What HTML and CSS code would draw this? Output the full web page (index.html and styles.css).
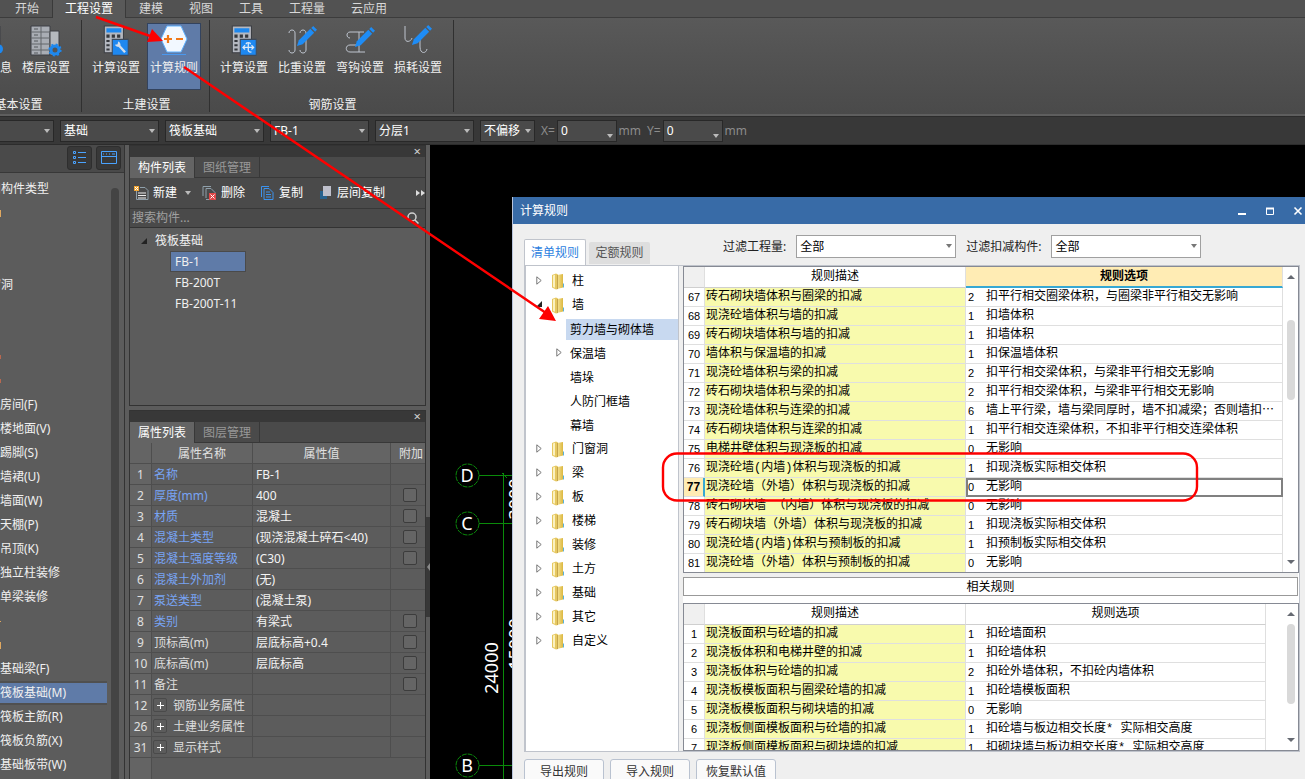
FILE: index.html
```html
<!DOCTYPE html>
<html lang="zh-CN">
<head>
<meta charset="utf-8">
<title>计算规则</title>
<link rel="stylesheet" href="styles.css">
</head>
<body>
<svg width="0" height="0" class="defs" aria-hidden="true">
  <defs>
    <linearGradient id="gold" x1="0" x2="1" y1="0" y2="0"><stop offset="0" stop-color="#f6e59a"/><stop offset="1" stop-color="#dcb840"/></linearGradient>
    <symbol id="folder" viewBox="0 0 14 17">
      <path d="M1 2l4-1.500 2 1V16l-2 .5-4-2z" fill="#e6c860"/>
      <path d="M2 2.500l2-.8v13L2 14z" fill="#fbf1c0"/>
      <path d="M6 2l6-1v13.500L6 16z" fill="url(#gold)"/>
      <path d="M6.500 2v14" stroke="#b08a2c" stroke-width=".7"/>
      <path d="M12.500 10.500v4" stroke="#5ab0d8" stroke-width="1"/>
    </symbol>
    <symbol id="closed" viewBox="0 0 6 9"><path d="M.8.8v7.4L5.2 4.500z" fill="none" stroke="#777" stroke-width="1"/></symbol>
    <symbol id="opened" viewBox="0 0 6 6"><path d="M6 0v6H0z" fill="#222"/></symbol>
    <symbol id="calc" viewBox="0 0 24 30">
      <path d="M1 1h18v25H1z" fill="#b4b8c0" stroke="#3c3f44"/>
      <path d="M3 3h14v4H3z" fill="#1e88ee"/>
      <path d="M3 9h3v3H3zM8 9h3v3H8zM13 9h3v3h-3zM3 14h3v2H3zM3 18h3v2H3zM3 22h3v2H3z" fill="#35383d"/>
      <path d="M8.500 13.500h15v15h-15z" fill="#1e88f0" stroke="#3c4a5c"/>
    </symbol>
    <symbol id="pencil" viewBox="0 0 22 22">
      <path d="M1 21l2-6L15 3l4 4L7 19z" fill="#1e8cf5"/><path d="M16 2l2-2 4 4-2 2z" fill="#1e8cf5"/>
    </symbol>
  </defs>
</svg>

<div class="app">
  <nav class="tabs">
    <button>开始</button><button class="on">工程设置</button><button>建模</button><button>视图</button><button>工具</button><button>工程量</button><button>云应用</button>
  </nav>

  <div class="ribbon">
    <section class="group group-first">
      <div class="tools">
        <button class="tool"><svg width="30" height="32" viewBox="0 0 30 32"><path d="M7 1h20v28H7z" fill="#aeb3ba" stroke="#3c3f44"/><circle cx="25" cy="24" r="5" fill="#1e88f0"/></svg>工程信息</button>
        <button class="tool"><svg width="32" height="32" viewBox="0 0 32 32">
          <path d="M1 1h19v29H1z" fill="#a9adb4" stroke="#3c3f44"/><path d="M20 6h9v24h-9z" fill="#b4b8be" stroke="#3c3f44"/>
          <path d="M11 1v29M1 7h19M1 13h19M1 19h19M1 25h19" stroke="#63666b"/><path d="M4 4h4M4 10h4M4 16h4M4 22h4M4 28h4" stroke="#55585d"/>
          <circle cx="25" cy="25" r="4" fill="#555" stroke="#1e88ee" stroke-width="3"/><circle cx="25" cy="25" r="5.600" fill="none" stroke="#1e88ee" stroke-width="2" stroke-dasharray="2 2.400"/></svg>楼层设置</button>
      </div><h3>基本设置</h3>
    </section>
    <section class="group">
      <div class="tools">
        <button class="tool"><svg width="26" height="32" viewBox="0 0 24 30"><use href="#calc"/><path d="M14.500 19l6 6.500" stroke="#d4deea" stroke-width="2.200"/><path d="M14 15.500l-.5 2.500-2.500.5a3 3 0 0 0 5 1 3 3 0 0 0-2-4z" fill="#d4deea"/></svg>计算设置</button>
        <button class="tool on"><svg width="32" height="32" viewBox="0 0 32 32"><path d="M9 1h14l6 13-6 13H9L3 14z" fill="#f2f8ff" stroke="#5fb1ff"/><path d="M6 14h8M10 10v8M18 14h7" stroke="#f07818" stroke-width="2.200"/><path d="M4 29.500h24" stroke="#4a98ee"/></svg>计算规则</button>
      </div><h3>土建设置</h3>
    </section>
    <section class="group">
      <div class="tools">
        <button class="tool"><svg width="26" height="32" viewBox="0 0 24 30"><use href="#calc"/><path d="M11 21h10M13 19l-2 2 2 2M19 19l2 2-2 2M16 17v7a2 2 0 0 0 3 1M14 18c0-2 4-2 4 0" fill="none" stroke="#dbe8f6" stroke-width="1.200"/></svg>计算设置</button>
        <button class="tool"><svg width="32" height="32" viewBox="0 0 32 32"><path d="M3 8c0-4 6-4 6 0v17c0 4-6 4-6 0M14 8c0-4 6-4 6 0v17c0 4-6 4-6 0" fill="none" stroke="#bfc5cf"/><use href="#pencil" x="10" y="1" width="21" height="21"/></svg>比重设置</button>
        <button class="tool"><svg width="32" height="32" viewBox="0 0 32 32"><path d="M20 7H6c-4 0-4 6 0 6M15 7v20M21 27H6c-5 0-5-7 0-7h9" fill="none" stroke="#bfc5cf"/><use href="#pencil" x="10" y="2" width="21" height="21"/></svg>弯钩设置</button>
        <button class="tool"><svg width="32" height="32" viewBox="0 0 32 32"><path d="M3 1v12c0 5 6 4 7 0M18 10v12c0 7 6 7 7 2" fill="none" stroke="#bfc5cf"/><use href="#pencil" x="9" y="0" width="21" height="21"/></svg>损耗设置</button>
      </div><h3>钢筋设置</h3>
    </section>
  </div>

  <div class="options">
    <span class="pick pick-cut"><select aria-label="楼层"><option></option></select></span>
    <span class="pick"><select aria-label="类别"><option>基础</option></select></span>
    <span class="pick"><select aria-label="类型"><option>筏板基础</option></select></span>
    <span class="pick"><select aria-label="构件"><option>FB-1</option></select></span>
    <span class="pick"><select aria-label="分层"><option>分层1</option></select></span>
    <span class="pick pick-small"><select aria-label="偏移"><option>不偏移</option></select></span>
    <label class="offset">X=<span class="pick pick-num"><input value="0"></span>mm</label>
    <label class="offset">Y=<span class="pick pick-num"><input value="0"></span>mm</label>
  </div>

  <main class="work">
    <aside class="nav">
      <div class="nav-head">
        <button aria-label="列表"><svg width="14" height="14" viewBox="0 0 14 14" fill="none" stroke="#4aa3ff"><path d="M.5.500h2v2h-2zM.5 5.500h2v2h-2zM.5 10.500h2v2h-2zM5 1.500h8M5 6.500h8M5 11.500h8"/></svg></button>
        <button aria-label="视图"><svg width="16" height="14" viewBox="0 0 16 14" fill="none" stroke="#4aa3ff"><path d="M.5.500h15v12H.5zM.5 5.500h15M2 3h1M5 3h1M8 3h1M11 3h3"/></svg></button>
      </div>
      <div class="nav-body">
        <ul>
          <li class="cut">常用构件类型</li><li><i></i></li><li></li><li></li><li class="cut">门窗洞</li><li></li><li></li><li><i class="red"></i></li><li><i class="red"></i></li>
          <li>房间(F)</li><li>楼地面(V)</li><li>踢脚(S)</li><li>墙裙(U)</li><li>墙面(W)</li><li>天棚(P)</li><li>吊顶(K)</li><li>独立柱装修</li><li>单梁装修</li><li><i class="dot"></i></li><li><i></i></li>
          <li>基础梁(F)</li><li class="on">筏板基础(M)</li><li>筏板主筋(R)</li><li>筏板负筋(X)</li><li>基础板带(W)</li>
        </ul>
        <div class="nav-scroll"></div>
      </div>
    </aside>

    <div class="docks">
      <section class="dock">
        <div class="dock-top"><button aria-label="关闭">×</button></div>
        <div class="dock-tabs"><button class="on">构件列表</button><button>图纸管理</button></div>
        <div class="dock-tools">
          <button><svg width="15" height="16" viewBox="0 0 15 16" fill="none"><path d="M6 2.500h5l3 3v9H2.500V6" stroke="#8fa0ab"/><path d="M4 8h8M4 10.500h8M4 13h8" stroke="#eee"/><path d="M0 1h5v5H0z" fill="#f2a633"/><path d="M1 2h1v1H1zM3 2h1v1H3zM2 3h1v1H2zM1 4h1v1H1zM3 4h1v1H3z" fill="#fff"/></svg>新建<b class="down"></b></button>
          <button class="t-del"><svg width="15" height="16" viewBox="0 0 15 16" fill="none"><path d="M1 11V1.500h8M4 13V3.500h5l4 4v7H4" stroke="#8fa0ab"/><path d="M7 8h7v7H7z" fill="#e04848"/><path d="M8.500 9.500l4 4M12.500 9.500l-4 4" stroke="#fff"/></svg>删除</button>
          <button class="t-copy"><svg width="13" height="16" viewBox="0 0 13 16" fill="none"><path d="M.5 12V1.500H8M3 3.500h5l4 4v7H3z" stroke="#3c93ee"/><path d="M5 7h4M5 9.500h5M5 12h5" stroke="#3c93ee"/></svg>复制</button>
          <button class="t-layer"><svg width="13" height="16" viewBox="0 0 13 16"><path d="M1 6h7v8H1z" fill="#27628f"/><path d="M4 1h8v10H4z" fill="#bfc0cc"/></svg>层间复制</button>
          <span class="more"><b></b><b></b></span>
        </div>
        <label class="search"><input placeholder="搜索构件..." aria-label="搜索构件"><svg width="12" height="12" viewBox="0 0 12 12" fill="none" stroke="#d0d0d0" stroke-width="1.500"><circle cx="5" cy="5" r="4"/><path d="M8 8l3.500 3.500"/></svg></label>
        <div class="parts">
          <p class="root"><svg width="6" height="6"><use href="#opened"/></svg>筏板基础</p>
          <p class="on">FB-1</p><p>FB-200T</p><p>FB-200T-11</p>
        </div>
      </section>

      <section class="dock dock-props">
        <div class="dock-top"><button aria-label="关闭">×</button></div>
        <div class="dock-tabs"><button class="on">属性列表</button><button>图层管理</button></div>
        <table class="props">
          <colgroup><col class="p-no"><col class="p-name"><col><col class="p-add"></colgroup>
          <thead><tr><th></th><th>属性名称</th><th>属性值</th><th>附加</th></tr></thead>
          <tbody>
            <tr><th>1</th><td class="key">名称</td><td>FB-1</td><td></td></tr>
            <tr><th>2</th><td class="key">厚度(mm)</td><td>400</td><td><input type="checkbox" aria-label="附加 厚度"></td></tr>
            <tr><th>3</th><td class="key">材质</td><td>混凝土</td><td><input type="checkbox" aria-label="附加 材质"></td></tr>
            <tr><th>4</th><td class="key">混凝土类型</td><td>(现浇混凝土碎石&lt;40)</td><td><input type="checkbox" aria-label="附加 混凝土类型"></td></tr>
            <tr><th>5</th><td class="key">混凝土强度等级</td><td>(C30)</td><td><input type="checkbox" aria-label="附加 混凝土强度等级"></td></tr>
            <tr><th>6</th><td class="key">混凝土外加剂</td><td>(无)</td><td></td></tr>
            <tr><th>7</th><td class="key">泵送类型</td><td>(混凝土泵)</td><td></td></tr>
            <tr><th>8</th><td class="key">类别</td><td>有梁式</td><td><input type="checkbox" aria-label="附加 类别"></td></tr>
            <tr><th>9</th><td>顶标高(m)</td><td>层底标高+0.4</td><td><input type="checkbox" aria-label="附加 顶标高"></td></tr>
            <tr><th>10</th><td>底标高(m)</td><td>层底标高</td><td><input type="checkbox" aria-label="附加 底标高"></td></tr>
            <tr><th>11</th><td>备注</td><td></td><td><input type="checkbox" aria-label="附加 备注"></td></tr>
            <tr><th>12</th><td><button class="plus" aria-label="展开"></button>钢筋业务属性</td><td></td><td></td></tr>
            <tr><th>26</th><td><button class="plus" aria-label="展开"></button>土建业务属性</td><td></td><td></td></tr>
            <tr><th>31</th><td><button class="plus" aria-label="展开"></button>显示样式</td><td></td><td></td></tr>
          </tbody>
        </table>
        <div class="props-rest"></div>
      </section>
    </div>

    <div class="splitter"><button aria-label="收起"></button></div>

    <div class="canvas">
      <svg class="axes" width="90" height="640" viewBox="0 0 90 640">
        <g fill="none" stroke="#0a8a0a">
          <path d="M49 330.500h41M49 378.500h41M49 620.500h41M73.500 328v312M72 328l5 5"/>
          <circle cx="37.500" cy="330.500" r="11.500" stroke-dasharray="5 1"/><circle cx="37.500" cy="378.500" r="11.500" stroke-dasharray="5 1"/><circle cx="37.500" cy="620.500" r="11.500" stroke-dasharray="5 1"/>
        </g>
        <g fill="#fff" text-anchor="middle">
          <text x="37" y="337">D</text><text x="37" y="385">C</text><text x="37" y="627">B</text>
          <text transform="translate(68 523) rotate(-90)">24000</text>
          <text transform="translate(92 499) rotate(-90)">15000</text>
          <text transform="translate(92 354) rotate(-90)">3000</text>
        </g>
      </svg>

      <section class="dialog">
        <header class="title"><h2>计算规则</h2>
          <button aria-label="最小化"><svg width="10" height="10"><path d="M1 8h8" stroke="#fff" stroke-width="2"/></svg></button>
          <button aria-label="最大化"><svg width="10" height="10"><path d="M1.500 2v6.500h7V2" fill="none" stroke="#fff"/><path d="M1 2.500h8" stroke="#fff" stroke-width="2"/></svg></button>
          <button aria-label="关闭"><svg width="10" height="10"><path d="M1.500 1.500l7 7M8.500 1.500l-7 7" stroke="#fff" stroke-width="1.600"/></svg></button>
        </header>
        <div class="dialog-body">
          <div class="bar">
            <button class="tab on">清单规则</button><button class="tab">定额规则</button>
            <label class="filter">过滤工程量:<span class="pick pick-light"><select><option>全部</option></select></span></label>
            <label class="filter filter-b">过滤扣减构件:<span class="pick pick-light"><select><option>全部</option></select></span></label>
          </div>
          <div class="pane">
            <ul class="tree">
              <li><svg class="tw" width="6" height="9"><use href="#closed"/></svg><svg class="fd" width="14" height="17"><use href="#folder"/></svg>柱</li>
              <li><svg class="tw" width="6" height="6"><use href="#opened"/></svg><svg class="fd" width="14" height="17"><use href="#folder"/></svg>墙</li>
              <li class="sub on"><span>剪力墙与砌体墙</span></li>
              <li class="sub"><svg class="tw" width="6" height="9"><use href="#closed"/></svg><span>保温墙</span></li>
              <li class="sub"><span>墙垛</span></li>
              <li class="sub"><span>人防门框墙</span></li>
              <li class="sub"><span>幕墙</span></li>
              <li><svg class="tw" width="6" height="9"><use href="#closed"/></svg><svg class="fd" width="14" height="17"><use href="#folder"/></svg>门窗洞</li>
              <li><svg class="tw" width="6" height="9"><use href="#closed"/></svg><svg class="fd" width="14" height="17"><use href="#folder"/></svg>梁</li>
              <li><svg class="tw" width="6" height="9"><use href="#closed"/></svg><svg class="fd" width="14" height="17"><use href="#folder"/></svg>板</li>
              <li><svg class="tw" width="6" height="9"><use href="#closed"/></svg><svg class="fd" width="14" height="17"><use href="#folder"/></svg>楼梯</li>
              <li><svg class="tw" width="6" height="9"><use href="#closed"/></svg><svg class="fd" width="14" height="17"><use href="#folder"/></svg>装修</li>
              <li><svg class="tw" width="6" height="9"><use href="#closed"/></svg><svg class="fd" width="14" height="17"><use href="#folder"/></svg>土方</li>
              <li><svg class="tw" width="6" height="9"><use href="#closed"/></svg><svg class="fd" width="14" height="17"><use href="#folder"/></svg>基础</li>
              <li><svg class="tw" width="6" height="9"><use href="#closed"/></svg><svg class="fd" width="14" height="17"><use href="#folder"/></svg>其它</li>
              <li><svg class="tw" width="6" height="9"><use href="#closed"/></svg><svg class="fd" width="14" height="17"><use href="#folder"/></svg>自定义</li>
            </ul>
            <div class="rules">
              <div class="grid">
                <table>
                  <colgroup><col class="c-no"><col class="c-desc"><col></colgroup>
                  <thead><tr><th></th><th>规则描述</th><th class="hot">规则选项</th></tr></thead>
                  <tbody>
                    <tr><th>67</th><td>砖石砌块墙体积与圈梁的扣减</td><td><em>2</em>扣平行相交圈梁体积，与圈梁非平行相交无影响</td></tr>
                    <tr><th>68</th><td>现浇砼墙体积与墙的扣减</td><td><em>1</em>扣墙体积</td></tr>
                    <tr><th>69</th><td>砖石砌块墙体积与墙的扣减</td><td><em>1</em>扣墙体积</td></tr>
                    <tr><th>70</th><td>墙体积与保温墙的扣减</td><td><em>1</em>扣保温墙体积</td></tr>
                    <tr><th>71</th><td>现浇砼墙体积与梁的扣减</td><td><em>2</em>扣平行相交梁体积，与梁非平行相交无影响</td></tr>
                    <tr><th>72</th><td>砖石砌块墙体积与梁的扣减</td><td><em>2</em>扣平行相交梁体积，与梁非平行相交无影响</td></tr>
                    <tr><th>73</th><td>现浇砼墙体积与连梁的扣减</td><td><em>6</em>墙上平行梁，墙与梁同厚时，墙不扣减梁；否则墙扣⋯</td></tr>
                    <tr><th>74</th><td>砖石砌块墙体积与连梁的扣减</td><td><em>1</em>扣平行相交连梁体积，不扣非平行相交连梁体积</td></tr>
                    <tr><th>75</th><td>电梯井壁体积与现浇板的扣减</td><td><em>0</em>无影响</td></tr>
                    <tr><th>76</th><td>现浇砼墙(内墙)体积与现浇板的扣减</td><td><em>1</em>扣现浇板实际相交体积</td></tr>
                    <tr class="current"><th>77</th><td>现浇砼墙（外墙）体积与现浇板的扣减</td><td><em>0</em>无影响</td></tr>
                    <tr><th>78</th><td>砖石砌块墙 （内墙）体积与现浇板的扣减</td><td><em>0</em>无影响</td></tr>
                    <tr><th>79</th><td>砖石砌块墙（外墙）体积与现浇板的扣减</td><td><em>1</em>扣现浇板实际相交体积</td></tr>
                    <tr><th>80</th><td>现浇砼墙(内墙)体积与预制板的扣减</td><td><em>1</em>扣预制板实际相交体积</td></tr>
                    <tr><th>81</th><td>现浇砼墙（外墙）体积与预制板的扣减</td><td><em>0</em>无影响</td></tr>
                  </tbody>
                </table>
                <div class="scroll scroll-mid"><b></b></div>
              </div>
              <div class="related">相关规则</div>
              <div class="grid grid-low">
                <table>
                  <colgroup><col class="c-no"><col class="c-desc"><col></colgroup>
                  <thead><tr><th></th><th>规则描述</th><th>规则选项</th></tr></thead>
                  <tbody>
                    <tr><th>1</th><td>现浇板面积与砼墙的扣减</td><td><em>1</em>扣砼墙面积</td></tr>
                    <tr><th>2</th><td>现浇板体积和电梯井壁的扣减</td><td><em>1</em>扣砼墙体积</td></tr>
                    <tr><th>3</th><td>现浇板体积与砼墙的扣减</td><td><em>2</em>扣砼外墙体积，不扣砼内墙体积</td></tr>
                    <tr><th>4</th><td>现浇板模板面积与圈梁砼墙的扣减</td><td><em>1</em>扣砼墙模板面积</td></tr>
                    <tr><th>5</th><td>现浇板模板面积与砌块墙的扣减</td><td><em>0</em>无影响</td></tr>
                    <tr><th>6</th><td>现浇板侧面模板面积与砼墙的扣减</td><td><em>1</em>扣砼墙与板边相交长度* 实际相交高度</td></tr>
                    <tr><th>7</th><td>现浇板侧面模板面积与砌块墙的扣减</td><td><em>1</em>扣砌块墙与板边相交长度* 实际相交高度</td></tr>
                  </tbody>
                </table>
                <div class="scroll"><b></b></div>
              </div>
            </div>
          </div>
          <footer><button>导出规则</button><button>导入规则</button><button>恢复默认值</button></footer>
        </div>
      </section>
    </div>
  </main>
</div>

<svg class="marks" width="1305" height="779" viewBox="0 0 1305 779" aria-hidden="true">
  <g fill="none" stroke="#fe0000" stroke-width="2.400"><path d="M96 17l54 19M184 67l362 246"/><rect x="663" y="453.500" width="534" height="47" rx="14"/></g>
  <path d="M163 41l-16 1 5-13zM556 321l-17-2 9-13z" fill="#fe0000"/>
</svg>
</body>
</html>
```

FILE: styles.css
```css
* { box-sizing: border-box; }
html, body { height: 100%; margin: 0; overflow: hidden; }
body { font: 12px/16px "Noto Sans", "Noto Sans CJK SC", sans-serif; color: #f0f0f0; background: #4c4c4c; position: relative; }
button, input, select { font: inherit; color: inherit; margin: 0; padding: 0; border: 0; background: none; border-radius: 0; }
h2, h3, p, ul { margin: 0; padding: 0; font: inherit; list-style: none; }
table { border-collapse: separate; border-spacing: 0; table-layout: fixed; }
th, td { padding: 0; font-weight: normal; white-space: nowrap; overflow: hidden; }
svg { flex: none; }
.defs { position: absolute; }
.app { height: 100vh; display: flex; flex-direction: column; }
.marks { position: absolute; left: 0; top: 0; pointer-events: none; }

/* ribbon */
.tabs { display: flex; height: 18px; padding-left: 2px; background: #525252; border-bottom: 1px solid #3c3c3c; flex: none; }
.tabs button { padding: 0 13px; height: 18px; line-height: 16px; color: #d8d8d8; }
.tabs .on { background: #595959; border: solid #3a3a3a; border-width: 0 1px; color: #fff; padding: 0 12px; }
.ribbon { display: flex; height: 98px; padding-top: 2px; flex: none; background: linear-gradient(#595959, #4a4a4a); border-bottom: 2px solid #5e5e5e; }
.group { height: 92px; padding: 3px 6px 0 5px; border-right: 1px solid #303030; display: flex; flex-direction: column; align-items: center; }
.group-first { margin-left: -43px; padding: 3px 6px 0 2px; }
.tools { display: flex; }
.tool { width: 54px; height: 67px; margin: 0 2px; padding-top: 1px; display: flex; flex-direction: column; align-items: center; gap: 3px; white-space: nowrap; border: 1px solid transparent; }
.tool.on { background: #5f7ba8; border-color: #33435e; }
.group h3 { margin-top: 7px; padding-left: 3px; color: #f0f0f0; }

/* option bar */
.options { display: flex; align-items: center; height: 29px; gap: 6px; background: #383838; border-top: 1px solid #2c2c2c; border-bottom: 1px solid #2c2c2c; flex: none; }
.pick { position: relative; display: block; width: 99px; height: 22px; }
.pick select, .pick input { appearance: none; width: 100%; height: 100%; padding: 0 3px; background: #4a4a4a; border: 1px solid #282828; color: #fff; outline: 0; }
.pick::after { content: ""; position: absolute; right: 4px; top: 9px; border: 3px solid transparent; border-top: 4px solid #bbb; border-bottom: 0; pointer-events: none; }
.pick-cut { width: 54px; }
.pick-cut select { border-left: 0; }
.pick-small { width: 55px; }
.pick-num { width: 61px; }
.pick-num::after { top: 14px; }
.offset { display: flex; align-items: center; gap: 2px; color: #8c8c8c; width: 100px; }
.pick-light { width: 160px; height: 23px; }
.pick-light select { background: #fff; border-color: #a0a0a0; color: #000; }
.pick-light::after { border-top-color: #777; }

.work { flex: 1; display: flex; min-height: 0; }

/* component navigation */
.nav { width: 125px; flex: none; display: flex; flex-direction: column; background: #5c5c5c; border-right: 1px solid #333; }
.nav-head { height: 28px; padding: 1px 3px; display: flex; justify-content: flex-end; gap: 4px; background: #4a4a4a; border-bottom: 1px solid #383838; flex: none; }
.nav-head button { width: 25px; height: 24px; background: #383838; border: 1px solid #2e2e2e; border-radius: 3px; display: grid; place-items: center; }
.nav-body { flex: 1; display: flex; overflow: hidden; padding-right: 5px; gap: 3px; }
.nav-body ul { flex: 1; min-width: 0; padding-top: 4px; }
.nav-body li { height: 24px; line-height: 22px; white-space: nowrap; display: flex; align-items: center; }
.nav-body .cut { text-indent: -23px; }
.nav-body .on { background: #5f7ba8; border: solid #505050; border-width: 2px 0; background-clip: padding-box; margin-right: 1px; }
.nav-body i { width: 1px; height: 7px; background: #e0a860; }
.nav-body .red { height: 4px; background: #b86850; }
.nav-body .dot { height: 1px; }
.nav-scroll { width: 8px; margin-top: 15px; background: #444; border-radius: 4px 4px 0 0; }

/* docked panels */
.docks { width: 301px; flex: none; padding-left: 4px; display: flex; flex-direction: column; gap: 4px; background: #5c5c5c; }
.dock { border: 1px solid #333; display: flex; flex-direction: column; height: 261px; flex: none; }
.dock-props { flex: 1; min-height: 0; border-bottom: 0; overflow: hidden; }
.dock-top { height: 10px; background: #383838; display: flex; justify-content: flex-end; padding-right: 4px; flex: none; }
.dock-top button { line-height: 10px; height: 10px; font-size: 13px; color: #d0d0d0; }
.dock-tabs { height: 22px; display: flex; background: #4a4a4a; border-bottom: 1px solid #383838; border-top: 1px solid #383838; flex: none; }
.dock-tabs button { width: 65px; height: 21px; border-right: 1px solid #383838; color: #989898; }
.dock-tabs .on { background: #646464; color: #fff; }
.dock-tools { height: 31px; display: flex; align-items: center; background: #4a4a4a; border-bottom: 1px solid #383838; padding: 0 0 0 4px; flex: none; }
.dock-tools button { display: flex; align-items: center; gap: 4px; white-space: nowrap; color: #fff; }
.down { border: 3px solid transparent; border-top: 4px solid #bbb; border-bottom: 0; margin-left: 4px; }
.dock-tools .t-del { margin-left: 11px; }
.dock-tools .t-copy { margin-left: 16px; gap: 5px; }
.dock-tools .t-layer { margin-left: 16px; gap: 5px; }
.more { margin-left: auto; display: flex; gap: 1px; }
.more b { border: 3px solid transparent; border-left: 4px solid #ddd; border-right: 0; }
.search { height: 19px; display: flex; align-items: center; background: #4a4a4a; border-bottom: 1px solid #333; padding: 0 6px 0 2px; flex: none; }
.search input { flex: 1; min-width: 0; outline: 0; }
.search input::placeholder { color: #a0a0a0; }
.parts { padding: 2px 0 0 40px; }
.parts p { width: 76px; height: 21px; padding-left: 4px; line-height: 19px; border: 1px solid transparent; white-space: nowrap; }
.parts .root { margin-left: -30px; padding: 0; display: flex; align-items: center; gap: 8px; }
.parts .on { background: #5f7ba8; border-color: #4a4a4a; }
.props { width: 100%; }
.p-no { width: 22px; } .p-name { width: 101px; } .p-add { width: 34px; }
.props th, .props td { height: 21px; line-height: 19px; border: solid #4e4e4e; border-width: 0 1px 1px 0; }
.props td { padding-left: 3px; background: #5c5c5c; color: #f4f4f4; }
.props tbody td:nth-child(2) { color: #ddd; padding-left: 2px; }
.props tbody .key:nth-child(2) { color: #78a4f4; }
.props th { background: #646464; text-align: center; color: #e0e0e0; }
.props td:last-child, .props thead th:last-child { border-right: 0; }
.props thead th:last-child { padding-left: 6px; }
.props td:last-child { padding-left: 12px; }
.props input { appearance: none; display: block; width: 14px; height: 14px; border: 1px solid #3c3c3c; border-radius: 2px; background: #656565; }
.plus { width: 14px; height: 14px; vertical-align: middle; margin: 0 6px 2px -1px; border: 1px solid #4a4a4a; border-radius: 2px; background: linear-gradient(#fff, #fff) center / 7px 1px no-repeat, linear-gradient(#fff, #fff) center / 1px 7px no-repeat; }
.props-rest { flex: 1; width: 22px; background: #646464; border-right: 1px solid #4e4e4e; }
.splitter { width: 4px; flex: none; background: #5c5c5c; display: flex; align-items: center; padding-top: 210px; }
.splitter button { width: 4px; height: 100px; background: #383838; display: grid; place-items: center; }
.splitter button::before { content: ""; border: 4px solid transparent; border-right: 3px solid #888; border-left: 0; }

/* drawing area */
.canvas { flex: 1; min-width: 0; position: relative; background: #000; overflow: hidden; }
.axes { position: absolute; left: 0; top: 0; font: 18px "Noto Sans", sans-serif; }

/* rule dialog */
.dialog { position: absolute; left: 82px; right: 0; top: 52px; bottom: -12px; display: flex; flex-direction: column; background: #efefef; color: #000; border-left: 1px solid #b8c4dc; }
.title { height: 27px; display: flex; align-items: center; gap: 18px; padding: 0 2px 0 7px; background: #386ba7; color: #fff; flex: none; }
.title h2 { margin-right: auto; }
.title button { width: 10px; height: 16px; display: grid; place-items: center; }
.dialog-body { flex: 1; min-height: 0; display: flex; flex-direction: column; padding: 11px 5px 0 11px; }
.bar { height: 30px; display: flex; align-items: flex-start; flex: none; }
.tab { width: 61px; height: 22px; margin-top: 7px; background: #dedede; border-radius: 2px 2px 0 0; color: #555; }
.tab.on { width: 62px; height: 26px; margin: 4px 3px 0 0; background: #fff; border: 1px solid #c0c4cc; border-bottom: 0; color: #2d7fe0; }
.filter { display: flex; align-items: center; gap: 10px; margin-left: 73px; white-space: nowrap; color: #222; }
.filter-b { margin-left: 10px; }
.filter-b .pick { width: 150px; }
.pane { flex: 1; min-height: 0; display: flex; gap: 4px; border: 1px solid #bfc3cb; border-width: 1px 1px 1px 0; }
.tree { width: 155px; flex: none; padding-top: 3px; background: #fff; border: 1px solid #c0c4cc; border-width: 0 1px 0 2px; }
.tree li { height: 24px; padding-left: 10px; display: flex; align-items: center; }
.tree .tw { margin: 0 9px 2px 0; width: 6px; }
.tree .fd { margin-right: 7px; }
.tree .sub { padding: 0 0 0 40px; }
.tree .sub .tw { margin: 0 4px 2px -10px; }
.tree .sub span { flex: 1; padding-left: 4px; line-height: 21px; }
.tree .on span { background: #c8d9f0; }
.rules { flex: 1; min-width: 0; display: flex; flex-direction: column; background: #fff; }
.grid { display: flex; height: 307px; flex: none; border: 1px solid #868a94; background: #fff; overflow: hidden; font-family: "Liberation Mono", "Noto Sans CJK SC", monospace; }
.grid-low { flex: 1; height: auto; margin-top: 7px; min-height: 0; }
.grid table { flex: 1; min-width: 0; align-self: flex-start; }
.c-no { width: 21px; } .c-desc { width: 261px; }
.grid th, .grid td { height: 19px; line-height: 16px; padding-top: 0; border: solid #dfdfdf; border-width: 0 1px 1px 0; }
.grid thead th { height: 21px; line-height: 18px; border-bottom-color: #cfcfcf; }
.grid thead th:first-child { background: #f0f0f0; }
.grid thead .hot { background: #ffecb4; border-bottom: 2px solid #36a8d4; font-weight: bold; }
.grid tbody th { text-align: center; font-family: "Liberation Sans", sans-serif; font-size: 11px; }
.grid td { padding-left: 1px; }
.grid td:last-child { padding-left: 2px; }
.grid td:nth-child(2) { background: #f8faad; }
.grid em { display: inline-block; vertical-align: top; width: 18px; font: 11px/17px "Liberation Sans", sans-serif; }
.grid .current th { background: #ffecb4; border-right: 2px solid #36a8d4; font-weight: bold; font-size: 12px; }
.grid .current td:last-child { border: 2px solid #808080; padding-left: 0; line-height: 15px; }
.grid .current em { line-height: 15px; }
.scroll { width: 15px; display: flex; flex-direction: column; align-items: center; padding: 8px 0; flex: none; }
.scroll::before, .scroll::after { content: ""; border: 4px solid transparent; border-bottom: 4px solid #666a72; border-top: 0; }
.scroll::after { border: 4px solid transparent; border-top: 4px solid #666a72; border-bottom: 0; margin-top: auto; }
.scroll b { width: 8px; height: 80px; margin-top: 8px; background: #d9d9d9; border-radius: 4px; }
.scroll-mid b { margin-top: 41px; }
.grid-low .scroll { margin-left: 17px; }
.related { height: 19px; margin-right: 1px; border: 1px solid #999; box-shadow: 0 -4px #efefef; margin-top: 4px; line-height: 18px; text-align: center; flex: none; }
footer { display: flex; gap: 6px; padding: 7px 0 6px; flex: none; }
footer button { width: 80px; height: 26px; background: #fafafa; border: 1px solid #b9c2d0; border-radius: 3px; color: #333; }
```
